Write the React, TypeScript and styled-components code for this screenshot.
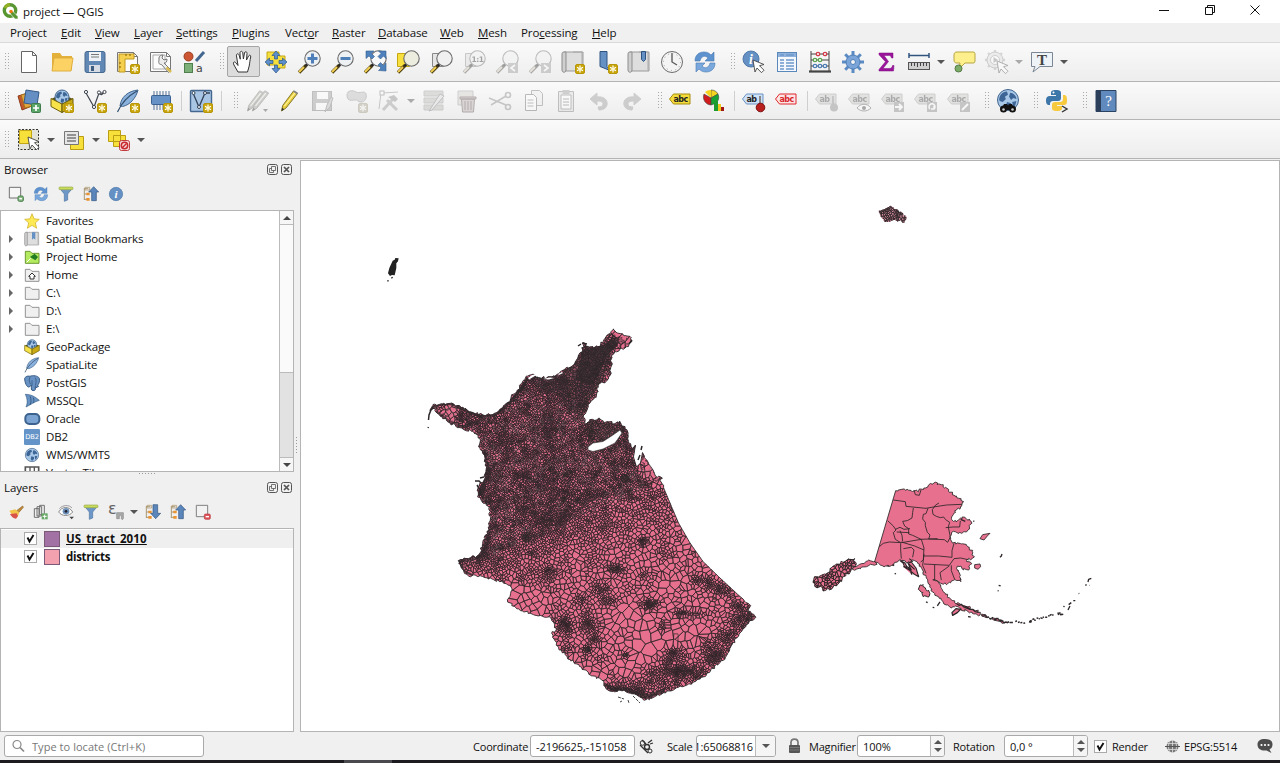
import React from "react";
import styled, { createGlobalStyle, css } from "styled-components";

const ui = `"Open Sans", "Noto Sans", sans-serif`;

const GlobalStyle = createGlobalStyle`
  * { box-sizing: border-box; }
  html, body { margin: 0; padding: 0; overflow: hidden; }
  body { font-family: ${ui}; font-size: 11.5px; letter-spacing: -0.1px; color: #111; background: #f0f0f0; cursor: default; }
  svg { display: block; flex: none; overflow: visible; }
`;

/* ---------- window frame ---------- */
const Window = styled.div`
  display: flex;
  flex-direction: column;
  width: 1280px;
  height: 763px;
  background: #f0f0f0;
`;
const TitleBar = styled.header`
  display: flex;
  align-items: center;
  height: 23px;
  padding: 0 2px;
  background: #fff;
`;
const Title = styled.span`
  flex: 1;
  margin-left: 5px;
  font-size: 11.5px;
`;
const WindowButton = styled.span`
  display: flex;
  justify-content: center;
  width: 45.5px;
  padding-bottom: 2px;
`;
const MenuBar = styled.nav`
  display: flex;
  align-items: center;
  height: 20px;
  padding-left: 10px;
  border-bottom: 1px solid #dadada;
`;
const MenuItem = styled.span<{ $w: number }>`
  width: ${(p) => p.$w + 14}px;
  white-space: nowrap;
  letter-spacing: -0.12px;
`;
const Toolbar = styled.div<{ $lower: boolean }>`
  display: flex;
  align-items: center;
  height: 39px;
  padding-top: ${(p) => (p.$lower ? 2 : 0)}px;
  border-bottom: 1px solid #b4b4b4;
  background: linear-gradient(#fafafa, #ededed);
`;
const Grip = styled.span<{ $first?: boolean }>`
  width: ${(p) => (p.$first ? 12.5 : 16)}px;
  height: 18px;
  padding-left: ${(p) => (p.$first ? 5 : 9)}px;
  &::before {
    content: "";
    display: block;
    width: 5px;
    height: 18px;
    background: radial-gradient(circle at 0.5px 0.5px, #aaa 0.6px, transparent 0.8px) 0 0 / 3px 3px;
  }
`;
const ToolButton = styled.button<{ $active?: boolean; $off?: boolean }>`
  display: flex;
  align-items: center;
  justify-content: center;
  width: 33px;
  height: 31px;
  padding: 0;
  border: 1px solid transparent;
  border-radius: 2px;
  background: none;
  ${(p) => p.$active && css`background: #dcdcdc; border-color: #a5a5a5;`}
  ${(p) => p.$off && css`filter: grayscale(0.85); opacity: 0.42;`}
`;
const Separator = styled.span`
  width: 7px;
  height: 20px;
  padding-left: 3px;
  &::before { content: ""; display: block; width: 1px; height: 20px; background: #cfcfcf; }
`;
const Caret = styled.span<{ $off?: boolean; $w?: number }>`
  display: flex;
  justify-content: center;
  width: ${(p) => p.$w ?? 12}px;
  &::before {
    content: "";
    margin-left: -1px;
    border: 4px solid transparent;
    border-bottom: 0;
    border-top-color: ${(p) => (p.$off ? "#aaa" : "#555")};
  }
`;

/* ---------- docks ---------- */
const Main = styled.main`
  display: flex;
  height: 573px;
`;
const Docks = styled.aside`
  display: flex;
  flex-direction: column;
  width: 294px;
`;
const DockHeader = styled.div`
  display: flex;
  align-items: center;
  gap: 3px;
  height: 22px;
  padding: 0 2px 2px 4px;
  & > span { flex: 1; }
`;
const DockTools = styled.div`
  display: flex;
  align-items: center;
  gap: 9px;
  height: 29px;
  padding: 0 0 3px 8px;
`;
const ListBox = styled.div<{ $h: number }>`
  display: flex;
  height: ${(p) => p.$h}px;
  border: 1px solid #b4b4b4;
  background: #fff;
  overflow: hidden;
`;
const Rows = styled.div`
  flex: 1;
  padding-top: 0.5px;
  overflow: hidden;
`;
const Row = styled.div<{ $selected?: boolean }>`
  display: flex;
  align-items: center;
  height: 18px;
  padding-left: 8px;
  background: ${(p) => (p.$selected ? "#efefef" : "transparent")};
`;
const Expander = styled.span<{ $on?: boolean }>`
  width: 15px;
  &::before {
    content: "";
    display: block;
    width: 0;
    border: 4px solid transparent;
    border-right: 0;
    border-left-color: ${(p) => (p.$on ? "#666" : "transparent")};
  }
`;
const RowLabel = styled.span<{ $strong?: boolean; $underline?: boolean }>`
  margin-left: 6px;
  line-height: 18px;
  white-space: pre;
  font-weight: ${(p) => (p.$strong ? 700 : 400)};
  text-decoration: ${(p) => (p.$underline ? "underline" : "none")};
  letter-spacing: ${(p) => (p.$underline ? "0.15px" : p.$strong ? "-0.3px" : "-0.13px")};
`;
const Swatch = styled.span<{ $c: string }>`
  width: 16px;
  height: 16px;
  margin-left: 7px;
  border: 1px solid #7a5a78;
  background: ${(p) => p.$c};
`;
const ScrollBar = styled.div`
  display: flex;
  flex-direction: column;
  width: 14px;
  border-left: 1px solid #bbb;
  background: #e2e2e2;
`;
const ScrollButton = styled.span<{ $down?: boolean }>`
  display: flex;
  align-items: center;
  justify-content: center;
  height: 14px;
  border: solid #bbb;
  border-width: ${(p) => (p.$down ? "1px 0 0" : "0 0 1px")};
  background: #f6f6f6;
  &::before {
    content: "";
    border: 4px solid transparent;
    ${(p) => (p.$down ? "border-bottom: 0; border-top-color: #444;" : "border-top: 0; border-bottom-color: #444;")}
  }
`;
const Thumb = styled.span`
  height: 148px;
  background: #fafafa;
  border-bottom: 1px solid #bbb;
`;
const ScrollTrack = styled.span`
  flex: 1;
`;
const Splitter = styled.div<{ $vertical?: boolean }>`
  display: flex;
  align-items: center;
  justify-content: center;
  ${(p) => (p.$vertical ? "width: 6px;" : "height: 5px;")}
  &::before {
    content: "";
    ${(p) => (p.$vertical ? "width: 3px; height: 17px;" : "width: 17px; height: 3px;")}
    background: radial-gradient(circle at 0.5px 0.5px, #999 0.5px, transparent 0.7px) 0 0 / 3px 3px;
  }
`;
const Canvas = styled.section`
  flex: 1;
  margin-top: 1px;
  border: 1px solid #b4b4b4;
  background: #fff;
  overflow: hidden;
`;

/* ---------- status bar ---------- */
const StatusBar = styled.footer`
  display: flex;
  align-items: center;
  height: 28px;
  padding: 0 0 0 4px;
  font-size: 11px;
  letter-spacing: -0.2px;
`;
const StatusText = styled.span<{ $w: number; $ml?: number }>`
  width: ${(p) => p.$w}px;
  margin-left: ${(p) => p.$ml ?? 0}px;
  white-space: nowrap;
`;
const StatusIcon = styled.span<{ $ml?: number }>`
  margin-left: ${(p) => p.$ml ?? 0}px;
`;
const Field = styled.span<{ $w: number; $ml?: number; $right?: boolean }>`
  display: flex;
  align-items: center;
  justify-content: ${(p) => (p.$right ? "flex-end" : "flex-start")};
  width: ${(p) => p.$w}px;
  height: 22px;
  margin-left: ${(p) => p.$ml ?? 0}px;
  padding-left: ${(p) => (p.$right ? 0 : 5)}px;
  border: 1px solid #a9a9a9;
  border-radius: 3px;
  background: #fff;
  white-space: nowrap;
  overflow: hidden;
`;
const FieldText = styled.span<{ $muted?: boolean; $end?: boolean }>`
  flex: 1;
  display: flex;
  min-width: 0;
  overflow: hidden;
  justify-content: ${(p) => (p.$end ? "flex-end" : "flex-start")};
  padding-right: ${(p) => (p.$end ? 2 : 0)}px;
  margin-left: ${(p) => (p.$muted ? 6 : 0)}px;
  color: ${(p) => (p.$muted ? "#777" : "#111")};
  letter-spacing: ${(p) => (p.$muted ? "0.05px" : "-0.08px")};
`;
const FieldButton = styled.span<{ $w: number }>`
  display: flex;
  flex-direction: column;
  align-items: center;
  justify-content: center;
  gap: 4px;
  width: ${(p) => p.$w}px;
  height: 20px;
  border-left: 1px solid #bbb;
  background: #f5f5f5;
`;
const Tip = styled.i<{ $up?: boolean }>`
  border: 4px solid transparent;
  ${(p) => (p.$up ? "border-top: 0; border-bottom-color: #555;" : "border-bottom: 0; border-top-color: #555;")}
`;
const Taskbar = styled.div`
  display: flex;
  height: 3px;
  padding-left: 344px;
  background: #1c1c20;
  &::before { content: ""; width: 48px; background: #4a4a4e; }
`;

/* ---------- icons ---------- */
const Ico = ({ s = 24, v = 24, children }: { s?: number; v?: number; children: React.ReactNode }) => (
  <svg width={s} height={s} viewBox={`0 0 ${v} ${v}`} fill="none">{children}</svg>
);
const Star = ({ x = 14, y = 14 }) => (
  <g transform={`translate(${x} ${y})`}>
    <rect x=".5" y=".5" width="9" height="9" rx="1.5" fill="#c9a60c" stroke="#b8960a" />
    <path d="M5 1.500v7M2 3.200l6 3.600M8 3.200L2 6.800" stroke="#fff" strokeWidth="1.200" />
    <circle cx="5" cy="5" r="1.200" fill="#fff6c8" />
  </g>
);
const Lens = ({ fill = "#eef1f4", children }: { fill?: string; children?: React.ReactNode }) => (
  <g>
    <path d="M2 22.500l7-7" stroke="#4a3c10" strokeWidth="3.400" />
    <path d="M2 22l5-5" stroke="#f2cf52" strokeWidth="2" />
    <circle cx="9.500" cy="15" r="1.500" fill="#222" />
    <circle cx="15.500" cy="8.500" r="7.700" fill={fill} stroke="#6a6a6a" strokeWidth="1.100" />
    {children}
  </g>
);
const Tag = ({ fill, stroke, color, text = "abc", y = 0 }: { fill: string; stroke: string; color: string; text?: string; y?: number }) => (
  <g transform={`translate(-.5 ${y})`}>
    <path d="M1 10l4-5h16.500v10H5z" fill={fill} stroke={stroke} strokeLinejoin="round" />
    <text x="5" y="13" fontFamily="DejaVu Sans" fontWeight="700" fontSize="8" letterSpacing="-.6" fill={color}>{text}</text>
  </g>
);
const Arrow4 = ({ fill = "#5d8fce" }) => (
  <path fill={fill} stroke="#2c5788" strokeWidth=".7" d="M12 1l4 4.500h-2.500V9h-3V5.500H8zM12 23l4-4.500h-2.500V15h-3v3.500H8zM1 12l4.500-4v2.500H9v3H5.500V16zM23 12l-4.500-4v2.500H15v3h3.500V16z" />
);
const Cursor = ({ x = 12, y = 10 }) => (
  <path transform={`translate(${x} ${y})`} d="M0 0l11 4.500-4.500 1.200 4.500 4.500-2.500 2.500-4.500-4.700L2 12z" fill="#fff" stroke="#444" strokeWidth=".9" strokeLinejoin="round" />
);
const Refresh = () => (
  <g>
    <path d="M2 11C2 5 6 2 11 2c3 0 5 1 7 3l3-3v9h-9l3-3c-3-3-7-2-8 3z" fill="#5f93cf" stroke="#4678b4" strokeWidth=".6" />
    <path d="M22 13c0 6-4 9-9 9-3 0-5-1-7-3l-3 3v-9h9l-3 3c3 3 7 2 8-3z" fill="#7aa8dc" stroke="#4678b4" strokeWidth=".6" />
  </g>
);
const Pencil = ({ c = "#e9cf3d" }) => (
  <g>
    <path d="M3.500 22l1.200-5.500L15.500 2l4 2.500L8 19z" fill={c} stroke="#85772b" strokeLinejoin="round" />
    <path d="M6.500 17L17.500 3.200" stroke="#fff3a0" strokeWidth="1.200" />
    <path d="M3.500 22l.7-3.200 2 1.400z" fill="#333" />
    <path d="M15.500 2l4 2.500" stroke="#888" strokeWidth="2" />
  </g>
);
const Paper = ({ children }: { children?: React.ReactNode }) => (
  <g>
    <path d="M1.500 2.500h16l4 4v15h-20z" fill="#fcfcfc" stroke="#777" />
    <path d="M17.500 2.500v4h4" stroke="#777" />
    {children}
  </g>
);
const Globe = ({ cx = 12, cy = 12, r = 10 }) => (
  <g>
    <circle cx={cx} cy={cy} r={r} fill="#a9c8e8" stroke="#3f648d" />
    <path transform={`translate(${cx - r} ${cy - r}) scale(${r / 10})`} d="M3 5c2-2 4-3 6-3l1 3-3 2 1 2-3 3-3-1c-1-2 0-4 1-6zM12 3c3 0 6 3 6 6l-3-1-2 2-2-3zM9 12l4 1v3l-3 3-2-3zM14 12l4-1-1 4-2 2z" fill="#3d6595" />
  </g>
);
const Box3d = () => (
  <g>
    <path d="M1 10l11-5 11 5-11 6z" fill="#5c5320" />
    <Globe cx={12} cy={8} r={7} />
    <path d="M1 9.500l11 5.500v8.500L1 17.500z" fill="#f8e24a" stroke="#6b5d0a" strokeLinejoin="round" />
    <path d="M23 9.500L12 15v8.500l11-6z" fill="#c9aa16" stroke="#6b5d0a" strokeLinejoin="round" />
  </g>
);
const Feather = () => (
  <g>
    <path d="M22 1C12 2 5 8 4 17l2.500.5C14 16 20 9 22 1z" fill="#8ab0dc" stroke="#41668f" />
    <path d="M1.500 23C5 15 12 7 21 2" stroke="#33506f" strokeWidth="1.200" />
  </g>
);
const Info = ({ cx = 12, cy = 12, r = 10 }) => (
  <g>
    <circle cx={cx} cy={cy} r={r} fill="#6490c4" stroke="#4f79ab" />
    <text x={cx} y={cy + r * 0.6} textAnchor="middle" fontFamily="Liberation Serif" fontStyle="italic" fontWeight="700" fontSize={r * 1.7} fill="#fff">i</text>
  </g>
);
const Book = () => (
  <g>
    <path d="M3 2h19v19H3z" fill="#dedede" stroke="#999" />
    <path d="M3 2c-2 0-2 1-2 3v15c0 3 4 3 4 0V2z" fill="#cfcfcf" stroke="#8d8d8d" />
    <path d="M12 2h9v18" stroke="#aaa" />
  </g>
);
const Funnel = () => (
  <g>
    <path d="M2 3h20l-7.500 9v9l-5 2V12z" fill="#6d97c8" stroke="#4b74a3" />
    <rect x="1.500" y="1.500" width="21" height="4" rx="1.500" fill="#c8dc5c" stroke="#98a94a" />
  </g>
);
const TreeArrow = ({ down }: { down?: boolean }) => (
  <g>
    <path d="M2 3v18M2 4h6M2 12h5M2 20h6" stroke="#a08a62" strokeWidth="1.300" />
    <path d="M3 2h7v4H3z" stroke="#b09c74" strokeWidth="1.200" />
    <path d="M5 10h5v4H5zM5 18h5v4H5z" fill="#e99330" />
    <path d="M16 1l7.500 8H20v13h-7V9H8.500z" transform={down ? "rotate(180 16 11.500)" : undefined} fill="#5b86bb" stroke="#32557f" />
  </g>
);
const Folder = ({ c = "#f0f0f0" }) => <path d="M2 3.500h7l3 3h10.500v15H2z" fill={c} stroke="#8c8c8c" strokeWidth="1.400" />;

const icons: Record<string, React.ReactNode> = {
  newDoc: <path d="M4.500 1.500h11l4 4v17h-15zM15.500 1.500v4h4" fill="#fff" stroke="#666" />,
  open: <g><path d="M2 3h8l2 3h10v14H2z" fill="#e3b03c" /><path d="M4 8h19l-2 13H2z" fill="#fcd265" stroke="#dfae40" /></g>,
  save: <g><rect x="2" y="1.500" width="20" height="21" rx="2" fill="#6187b5" stroke="#46698f" /><path d="M6 2h12v9H6z" fill="#eef1f6" /><path d="M8 4.500h8M8 7h8" stroke="#777" /><path d="M6 15h11v7H6z" fill="#d7dce4" /><path d="M8 16h3v5H8z" fill="#3e5c82" /></g>,
  layout: <g><Paper /><path d="M3 4h15v5H9v13H3z" fill="#f5cf4e" stroke="#c2981e" /><path d="M10 4v2M14 4v2M3 13h2M3 17h2" stroke="#806000" /><Star /></g>,
  manager: <g><Paper /><path d="M4 5h12v14H4z" stroke="#aaa" /><path d="M10 8c0-2 2-3 4-3l-1 3 2 2 3-1c0 3-1 4-3 4l7 7-2.500 2.500-7-8c-3 0-3-2-2.500-4.500z" fill="#ececec" stroke="#777" /><path d="M17.500 17.500l4.500 4.500" stroke="#d9bb50" strokeWidth="2.500" /></g>,
  style: <g><circle cx="6.500" cy="6.500" r="4.500" fill="#cc5633" stroke="#9b3c20" /><path d="M14 11l8-9" stroke="#42668f" strokeWidth="3" /><rect x="2.500" y="13.500" width="8" height="9" fill="#7caf78" stroke="#4f7f4d" /><text x="14" y="22" fontFamily="DejaVu Sans" fontSize="11" fill="#444">a</text></g>,
  hand: <path d="M7 22l-4-7c-1.500-3 .5-4 2-2l2 2.500L5.500 6c-.5-2.500 2-3 2.600-.8l1.200 4L9 3c0-2.200 2.600-2.200 2.800 0l.6 6L13.500 3c.4-2 2.600-1.600 2.500.5L15.500 10l2-4c1-1.500 2.600-.8 2.200 1-.8 3.500-1 6-1.500 9L16.500 22z" fill="#fff" stroke="#333" strokeLinejoin="round" />,
  panSel: <g><path d="M3 2h12v4h6v12H11v-3H3z" fill="#f7df3e" stroke="#c5a713" /><Arrow4 /></g>,
  zoomIn: <Lens><path d="M15.500 3.500v10M10.500 8.500h10" stroke="#4e7fb8" strokeWidth="3" /></Lens>,
  zoomOut: <Lens><path d="M10.500 8.500h10" stroke="#4e7fb8" strokeWidth="3" /></Lens>,
  zoomFull: <g><Lens fill="#f6f8fa" /><path d="M3 1h8l-2.500 2.500 3 3-2.500 2.500-3-3L3 8.500zM23 1v7.500L20.500 6l-3 3-2.500-2.500 3-3L15.500 1zM23 21v-8l-2.500 2.500-3-3-2.500 2.500 3 3-2.500 2.500z" fill="#4f81bd" stroke="#34608f" strokeWidth=".6" /></g>,
  zoomSel: <g><path d="M1.500 3.500h12v13h-12z" fill="#f7df3e" stroke="#c5a713" /><Lens fill="#ededdf" /></g>,
  zoomLayer: <g><path d="M3.500 3.500h11v13h-11z" fill="#e6e6e6" stroke="#888" /><Lens fill="#f0f0f0" /></g>,
  zoomNative: <g><path d="M3.500 3.500h11v13h-11z" fill="#ddd" stroke="#888" /><Lens><text x="9.500" y="11.500" fontFamily="DejaVu Sans" fontWeight="700" fontSize="7.500" letterSpacing="-.5" fill="#333">1:1</text></Lens></g>,
  zoomLast: <g><Lens /><rect x="13" y="13" width="10" height="10" fill="#999" /><path d="M20 15l-4 3 4 3" stroke="#fff" strokeWidth="1.600" /></g>,
  zoomNext: <g><Lens /><rect x="13" y="13" width="10" height="10" fill="#999" /><path d="M16 15l4 3-4 3" stroke="#fff" strokeWidth="1.600" /></g>,
  newBook: <g><Book /><Star /></g>,
  newMark: <g><path d="M6 1.500h7v15l3 4-10-4z" fill="#6590c4" stroke="#2f5380" /><Star /></g>,
  showBook: <g><Book /><path d="M14.500 1.500h4v8l-2 2-2-2z" fill="#6590c4" stroke="#2f5380" /></g>,
  clock: <g><circle cx="12" cy="12" r="10.500" fill="#f4f4f4" stroke="#6c6c6c" /><path d="M12 3v9l5 3" stroke="#555" strokeWidth="1.300" /><circle cx="12" cy="12" r="8.500" stroke="#999" strokeDasharray="1 3.450" /></g>,
  refresh: <Refresh />,
  identify: <g><Info cx={9} cy={9} r={8} /><Cursor x={11} y={10} /></g>,
  table: <g><rect x="2.500" y="2.500" width="19" height="19" fill="#f4f8fc" stroke="#5b88bb" /><path d="M3 3h18v4H3z" fill="#8fb2dc" /><path d="M5 10h4M11 10h8M5 13h4M11 13h8M5 16h4M11 16h8M5 19h4M11 19h8M5 5h4M11 5h8" stroke="#6c98cb" strokeWidth="1.300" /></g>,
  abacus: <g><path d="M3 1v20M21 1v20M3 4h18M3 10h18M3 16h18" stroke="#444" /><path d="M1 21.500h22" stroke="#444" strokeWidth="2.200" /><g fill="#fff" strokeWidth="1.300"><g stroke="#d03b47"><circle cx="10" cy="4" r="1.700" /><circle cx="17" cy="4" r="1.700" /></g><g stroke="#5ba34d"><circle cx="7" cy="10" r="1.700" /><circle cx="12" cy="10" r="1.700" /></g><g stroke="#4d7db5"><circle cx="7" cy="16" r="1.700" /><circle cx="12" cy="16" r="1.700" /><circle cx="17" cy="16" r="1.700" /></g></g></g>,
  gear: <g><path d="M12 1v22M1 12h22M4.200 4.200l15.600 15.600M19.800 4.200L4.200 19.800" stroke="#5c8bc3" strokeWidth="3" /><circle cx="12" cy="12" r="7" fill="#7ba5d8" stroke="#4e7fb9" /><circle cx="12" cy="12" r="2.500" fill="#f4f4f4" stroke="#4e7fb9" /></g>,
  sigma: <path d="M5 3h14v5h-1.500c-.5-2-1-2.500-3-2.500H10l4.500 6L9 18.500h6c2.500 0 3-1 3.500-3H20l-.5 5.500H5v-1.500l6.500-7.800L5 4.700z" fill="#9b159b" stroke="#7d0a80" strokeWidth=".5" />,
  ruler: <g><path d="M2 5.500h20M2 3v5M22 3v5" stroke="#31547f" strokeWidth="1.500" /><rect x="1.500" y="12.500" width="21" height="7" fill="#cfcfcf" stroke="#555" /><path d="M4.500 13v3M7.500 13v3M10.500 13v4M13.500 13v3M16.500 13v3M19.500 13v3" stroke="#444" /></g>,
  mapTip: <g><path d="M5 2h16c2 0 2 1 2 3v5c0 2 0 3-2 3h-8l-6 6 1-6H5c-2 0-3-1-3-3V5c0-2 1-3 3-3z" fill="#fdf08c" stroke="#b7a542" /><circle cx="6.500" cy="18.500" r="3.500" fill="#7dab68" stroke="#557b45" /></g>,
  action: <g><path d="M10 0v20M0 10h20M3 3l14 14M17 3L3 17" stroke="#aaa" strokeWidth="2.400" /><circle cx="10" cy="10" r="8" fill="#ddd" stroke="#999" /><circle cx="10" cy="10" r="4.500" fill="#fff" stroke="#999" /><path d="M8.500 7l4.500 3-4.500 3z" fill="#888" /><Cursor x={12} y={11} /></g>,
  annot: <g><path d="M1.500 2.500h21v14H10L3 22l2-5.500H1.500z" fill="#eef3f8" stroke="#7b8794" /><text x="12" y="14.500" textAnchor="middle" fontFamily="Liberation Serif" fontWeight="700" fontSize="15" fill="#444">T</text></g>,

  dataSource: <g><path d="M1 7l10-3 4 13-10 4z" fill="#c4572c" stroke="#8f3c1b" /><path d="M4 6l12-3 3 13-11 3z" fill="#e2a43c" stroke="#a6741b" /><path d="M9 1l13 2-2 13-13-2z" fill="#658fc3" stroke="#355a86" /><rect x="14.500" y="14.500" width="9" height="9" rx="1" fill="#5aa568" stroke="#3f7d4b" /><path d="M19 16v6M16 19h6" stroke="#fff" strokeWidth="1.700" /></g>,
  gpkgNew: <g><Box3d /><Star /></g>,
  shp: <g><path d="M3 4l8 14 5-14h5M16 4c2 3 4 1 5-1" stroke="#40464f" strokeWidth="1.200" /><g fill="#fff" stroke="#40464f"><circle cx="3" cy="3" r="1.600" /><circle cx="11" cy="18" r="1.600" /><circle cx="16" cy="3.500" r="1.600" /><circle cx="21.500" cy="3" r="1.600" /></g><Star /></g>,
  spatialiteNew: <g><Feather /><Star /></g>,
  memory: <g><path d="M5 2v19M8 2v19M11 2v19M14 2v19M17 2v19M20 2v19" stroke="#6f87a5" strokeWidth="1.200" /><rect x="2.500" y="6.500" width="19" height="9" rx="1" fill="#6691c6" stroke="#3a618f" /><Star /></g>,
  virtual: <g><rect x="1.500" y="1.500" width="21" height="21" rx="1" fill="#a9c5e4" stroke="#44678f" strokeWidth="1.400" /><path d="M4 4l6 14 6-14h5" stroke="#33445a" strokeWidth="1.300" /><g fill="#fff" stroke="#33445a"><circle cx="4.500" cy="4" r="1.500" /><circle cx="10" cy="18" r="1.500" /><circle cx="16" cy="4" r="1.500" /></g><Star /></g>,
  edits: <g transform="translate(-1 0)"><Pencil c="#999" /><g transform="translate(5 0)"><Pencil c="#999" /></g><path d="M19 20l5 0-2.500 3z" fill="#444" /></g>,
  pencil: <Pencil />,
  saveEdits: <g><rect x="1.500" y="2.500" width="19" height="19" fill="#999" stroke="#777" /><path d="M6 3h11v7H6zM5 14h11v7H5z" fill="#fff" /><path d="M22 9l-3 9-5 5 2-7 4-8z" fill="#bbb" stroke="#777" /></g>,
  addPoly: <g><path d="M3 6c0-5 6-5 9-3s9-2 10 2-1 8-5 8-3-3-7-2-7 0-7-5z" fill="#bbb" stroke="#888" /><Star /></g>,
  vertex: <g><path d="M4 4L2 20M6 4l15-1" stroke="#888" /><rect x="3" y="2" width="4" height="4" fill="#fff" stroke="#777" /><path d="M6 21L17 9M10 11l10 10" stroke="#999" strokeWidth="3" /><path d="M11 8l6-2 4 4-3 3z" fill="#888" /></g>,
  modify: <g><path d="M2 2h19v5H2zM2 9h19v5H2zM2 16h19v5H2z" fill="#bcbca0" stroke="#999" /><path d="M7 22L18 5l4 2-12 14z" fill="#ddd" stroke="#777" /></g>,
  trash: <g><path d="M3 2h15v14H3z" fill="#d6d2a8" stroke="#999" /><path d="M5 8h16v2H5zM6.500 10h13l-1 13h-11z" fill="#e3a3a3" stroke="#b33" /><path d="M10 12v9M13 12v9M16 12v9" stroke="#b33" /></g>,
  cut: <g stroke="#888" strokeWidth="1.600"><path d="M1 9l17 7M3 16l15-9" /><circle cx="20" cy="6" r="2.500" /><circle cx="20" cy="18" r="2.500" /></g>,
  copy: <g><path d="M10.500 1.500h8l3 3v12h-11z" fill="#eee" stroke="#777" /><path d="M4.500 5.500h8l3 3v13h-11z" fill="#fff" stroke="#666" /><path d="M6.500 11h6M6.500 14h6M6.500 17h6" stroke="#777" /></g>,
  paste: <g><path d="M4.500 2.500h15v20h-15z" fill="#ddd" stroke="#777" /><path d="M7 6h10v14H7z" fill="#fff" stroke="#777" /><path d="M8.500 1h7v4h-7z" fill="#999" /><path d="M9 10h6M9 13h6M9 16h6" stroke="#666" /></g>,
  undo: <path d="M3 10l7-6v4c7-1 11 3 10 8-1 4-5 5-8 5l-1-3c3 0 5-1 5-3s-2-3-6-3v4z" fill="#999" stroke="#999" />,
  redo: <path d="M21 10l-7-6v4c-7-1-11 3-10 8 1 4 5 5 8 5l1-3c-3 0-5-1-5-3s2-3 6-3v4z" fill="#999" stroke="#999" />,
  label: <Tag fill="#f4dc3c" stroke="#a48c12" color="#222" />,
  diagram: <g><path d="M9 9V1a8 8 0 0 1 7 4z" fill="#f6d51e" stroke="#444" strokeWidth=".6" /><path d="M9 9L3 3a8 8 0 0 1 6-2z" fill="#f6d51e" /><path d="M9 9L2 5a8 8 0 0 0 7 11z" fill="#d01c1c" stroke="#444" strokeWidth=".6" /><path d="M9 9l7-4c2 5 0 9-7 11z" fill="#18a431" stroke="#444" strokeWidth=".6" /><path d="M12 12h4v10h-4z" fill="#1c9c30" /><path d="M16 15h3v7h-3z" fill="#eec91c" /><path d="M19 18h3v4h-3z" fill="#a31616" /></g>,
  labelPin: <g><Tag fill="#cfe1f6" stroke="#6b93c4" color="#222" text="ab" /><path d="M18 7v9" stroke="#888" strokeWidth="2" /><circle cx="18.500" cy="18.500" r="4.300" fill="#b7201f" stroke="#7c1111" /></g>,
  labelRed: <Tag fill="#fbe4e4" stroke="#e0262c" color="#d8262c" />,
  lPin: <g><Tag fill="#c9c9b8" stroke="#999" color="#444" text="ab" /><path d="M18 7v9" stroke="#888" strokeWidth="2" /><circle cx="19" cy="18.500" r="4" fill="#888" /></g>,
  lShow: <g><Tag fill="#c9c9b8" stroke="#999" color="#444" /><path d="M9 19c4-5 10-5 14 0-4 4-10 4-14 0z" fill="#fff" stroke="#555" /><circle cx="16" cy="19" r="2" fill="#444" /></g>,
  lMove: <g><Tag fill="#c9c9b8" stroke="#999" color="#444" /><rect x="13" y="13" width="10" height="10" fill="#888" /><path d="M14 18h7M18 15l3 3-3 3" stroke="#fff" strokeWidth="1.800" /></g>,
  lRot: <g><Tag fill="#c9c9b8" stroke="#999" color="#444" /><rect x="13" y="13" width="10" height="10" fill="#888" /><path d="M16 20a3 3 0 1 1 4 0M20 17v3h-3" stroke="#fff" strokeWidth="1.500" /></g>,
  lEdit: <g><Tag fill="#c9c9b8" stroke="#999" color="#444" /><rect x="13" y="13" width="10" height="10" fill="#888" /><path d="M15 21l6-6" stroke="#fff" strokeWidth="2" /></g>,
  search: <g><Globe cx={12} cy={11} r={10.500} /><path d="M5 21l3-6h3l1 1.500 1-1.500h3l3 6z" fill="#111" /><circle cx="7.500" cy="20" r="3.500" fill="#111" /><circle cx="16.500" cy="20" r="3.500" fill="#111" /><circle cx="7.500" cy="20.500" r="1.300" fill="#ccc" /><circle cx="16.500" cy="20.500" r="1.300" fill="#ccc" /></g>,
  python: <g><path d="M11 1c4 0 5 1 5 3v5c0 2-1 3-3 3H8c-2 0-3 1-3 3v1H3c-2-1-2-3-2-5s1-4 4-4h6V6H6V4c0-2 1-3 5-3z" fill="#3d76a9" /><path d="M12 22c-4 0-5-1-5-3v-3c0-2 1-3 3-3h5c2 0 3-1 3-3V6h2c2 1 2 3 2 6s-1 4-3 4h-7v1h5v2c0 2-1 3-5 3z" fill="#f7ca3d" /><circle cx="8.500" cy="3.500" r="1" fill="#fff" /><path d="M17 17l5 3-5 3" stroke="#333" strokeWidth="1.400" /></g>,
  help: <g><path d="M2 1.500h20v21H2z" fill="#6089bd" stroke="#2b4360" /><path d="M2 1.500h5v21H2z" fill="#2c3f5a" /><text x="14.500" y="17" textAnchor="middle" fontFamily="Liberation Serif" fontSize="15" fill="#fff">?</text></g>,

  select: <g><path d="M1.500 1.500h20v20h-20z" fill="#e3e3d9" stroke="#333" strokeDasharray="2 1.500" /><path d="M2.500 2.500h12v13h-12z" fill="#f8e03a" stroke="#c5a713" /><Cursor x={11} y={9} /></g>,
  selForm: <g><path d="M8.500 8.500h13v13h-13z" fill="#f8e03a" stroke="#b99d12" /><path d="M2.500 3.500h14v13h-14z" fill="#e6e6e6" stroke="#777" /><path d="M5 7h9M5 10h9M5 13h9" stroke="#777" strokeWidth="1.400" /></g>,
  deselect: <g><path d="M1.500 2.500h12v11h-12zM6.500 7.500h12v11h-12z" fill="#f8e03a" stroke="#b99d12" /><rect x="12.500" y="12.500" width="10" height="10" rx="2" fill="#f6d9d9" stroke="#c43b3e" /><circle cx="17.500" cy="17.500" r="3.200" stroke="#c82b30" strokeWidth="1.500" /><path d="M15.500 19.500l4-4" stroke="#c82b30" strokeWidth="1.500" /></g>,

  addLayer: <g><path d="M2 2h17v16H2z" fill="#f6f6f6" stroke="#666" strokeWidth="1.400" /><rect x="15" y="15" width="8" height="8" rx="2" fill="#8ab885" stroke="#49804a" strokeWidth="1.500" /><path d="M17 19h4" stroke="#fff" strokeWidth="2" /></g>,
  removeLayer: <g><path d="M2 2h17v17H2z" fill="#f2f2f2" stroke="#777" strokeWidth="1.400" /><rect x="14" y="15" width="9" height="8" rx="2" fill="#e0565c" stroke="#b8383f" /><path d="M16 19h5" stroke="#fff" strokeWidth="2" /></g>,
  filter: <Funnel />,
  collapse: <TreeArrow />,
  expand: <TreeArrow down />,
  info: <Info />,
  styling: <g><path d="M13 10l9-7 1 2-7 8z" fill="#c08a3a" stroke="#916322" /><path d="M2 10l9-2 6 5-3 7c-5 0-9-5-12-10z" fill="#f1c54a" /><path d="M3 15l10-1 2 4-3 4c-4 0-7-3-9-7z" fill="#d9534a" /></g>,
  addGroup: <g><path d="M2 7h7v13H2zM6 4h7v14H6zM10 2h7v14h-7z" stroke="#666" strokeWidth="1.400" /><rect x="13" y="14" width="9" height="9" fill="#67a867" /><path d="M17.500 16v6M14.500 18.500h6" stroke="#fff" strokeWidth="1.500" /></g>,
  eye: <g><path d="M1 12C6 3 17 3 22 12 17 19 6 19 1 12z" fill="#fff" stroke="#777" strokeWidth="1.300" /><circle cx="12" cy="11" r="5" fill="#6c8fb8" /><circle cx="12" cy="11" r="2" fill="#223" /><path d="M2 7C7 1 17 1 21 6" stroke="#888" strokeWidth="1.200" /><path d="M17 19h7l-3.500 4z" fill="#444" /></g>,
  epsilon: <g><text x="0" y="15" fontFamily="DejaVu Sans" fontSize="24" fill="#666">ε</text><path d="M13 13h10v8c0 3-3 3-3 0v-4h-3v5h-4z" fill="#aaa" stroke="#888" /></g>,

  star: <path d="M12 1l3.200 7.800L23 9.500l-6 5.300 2 8.200-7-4.500L5 23l2-8.200-6-5.300 7.800-.7z" fill="#fdea54" stroke="#cba81c" />,
  bookmark: <g><Book /><path d="M12 2h5v11l-2.500-2L12 13z" fill="#6590c4" /></g>,
  projHome: <g><path d="M2 3.500h7l3 3h10.500v15H2z" fill="#b4ea5f" stroke="#65912c" strokeWidth="1.400" /><path d="M9 12l7-5 5 5-4 5z" fill="#217c22" /><path d="M4 20l6-6" stroke="#fff" strokeWidth="1.500" /></g>,
  home: <g><Folder /><path d="M7 14l5-5 5 5h-2v4H9v-4z" fill="#fff" stroke="#333" strokeWidth="1.500" /></g>,
  folder: <Folder />,
  gpkg: <Box3d />,
  feather: <Feather />,
  elephant: <g><path d="M1 5c2-4 6-3.500 8-3 4-2 12-1 14 3 1 5-1 9-3 11l2 1-4 2-1-2v5c-1 2-6 2-6-1v-6l-3 3c-4 1-7-7-7-13z" fill="#6892c3" stroke="#345a84" strokeWidth="1.500" /><path d="M9 3c-2 4-1 8 1 11M17 4c2 4 1 8 0 12M12 8v8" stroke="#345a84" strokeWidth="1.200" /></g>,
  mssql: <g><path d="M2 2c8 0 14 3 21 9-7 2-12 6-20 10 3-6 2-13-1-19z" fill="#6892c3" stroke="#345a84" /><path d="M9 5c2 4 2 9 0 13M14 7c1 3 1 5 0 8" stroke="#345a84" strokeWidth="1.400" /></g>,
  oracle: <rect x="2" y="4.500" width="21" height="15" rx="6" fill="#7ba4d3" stroke="#3c628d" strokeWidth="3" />,
  db2: <g><rect width="24" height="24" rx="2" fill="#6595c8" /><text x="12" y="15.500" textAnchor="middle" fontFamily="DejaVu Sans" fontSize="10" fill="#fff">DB2</text></g>,
  globe: <Globe />,
  tiles: <g><path d="M2 3h20v20H2z" fill="#fff" stroke="#555" strokeWidth="2.500" /><path d="M9 3v20M15.500 3v20M2 10h20M2 16h20" stroke="#555" strokeWidth="2" /></g>,
};

const DockButtons = () => (
  <>
    <svg width="11" height="11" viewBox="0 0 11 11" fill="none" stroke="#555"><rect x=".5" y=".5" width="10" height="10" rx="2" /><path d="M4.500 2.500h4v4h-4zM6.500 6.500v2h-4v-4h2" strokeWidth=".8" /></svg>
    <svg width="11" height="11" viewBox="0 0 11 11" fill="none" stroke="#555"><rect x=".5" y=".5" width="10" height="10" rx="2" /><path d="M3 3l5 5M8 3L3 8" strokeWidth="1.700" /></svg>
  </>
);
const CheckBox = () => (
  <svg width="13" height="13" viewBox="0 0 13 13" fill="none"><rect x=".5" y=".5" width="12" height="12" fill="#fff" stroke="#aaa" /><path d="M3.500 5.500l2 4L9.500 3" stroke="#111" strokeWidth="1.900" /></svg>
);

/* ---------- map geometry ---------- */
type Pt = [number, number];
const random = (seed: number) => () => {
  seed = (seed + 0x6d2b79f5) | 0;
  let t = Math.imul(seed ^ (seed >>> 15), 1 | seed);
  t = (t + Math.imul(t ^ (t >>> 7), 61 | t)) ^ t;
  return ((t ^ (t >>> 14)) >>> 0) / 4294967296;
};
const parse = (s: string): Pt[] => s.trim().split(/\s+/).map((p) => p.split(",").map(Number) as Pt);

/* turns a coarse coastline into a ragged one; the closing segment stays straight */
const coast = (src: string, amp: number, step: number, seed = 5, calm: (x: number, y: number) => boolean = () => false) => {
  const r = random(seed);
  const pts = parse(src);
  let d = `M${pts[0]}`;
  for (let i = 1; i < pts.length; i++) {
    const [ax, ay] = pts[i - 1];
    const [bx, by] = pts[i];
    const n = Math.max(1, Math.round(Math.hypot(bx - ax, by - ay) / step));
    for (let k = 1; k <= n; k++) {
      const x = ax + ((bx - ax) * k) / n;
      const y = ay + ((by - ay) * k) / n;
      const j = calm(x, y) ? 0 : k === n ? amp * 0.4 : amp;
      d += `L${(x + (r() - 0.5) * 2 * j).toFixed(1)},${(y + (r() - 0.5) * 2 * j).toFixed(1)}`;
    }
  }
  return d + "Z";
};

const inside = (poly: Pt[], x: number, y: number) => {
  let hit = false;
  for (let i = 0, j = poly.length - 1; i < poly.length; j = i++) {
    const [xi, yi] = poly[i];
    const [xj, yj] = poly[j];
    if (yi > y !== yj > y && x < ((xj - xi) * (y - yi)) / (yj - yi) + xi) hit = !hit;
  }
  return hit;
};

/* smooth value noise in 0..1 */
const lattice = (i: number, j: number) => {
  const n = Math.sin(i * 127.1 + j * 311.7) * 43758.5453;
  return n - Math.floor(n);
};
const noise = (x: number, y: number) => {
  const i = Math.floor(x);
  const j = Math.floor(y);
  const u = x - i;
  const v = y - j;
  const su = u * u * (3 - 2 * u);
  const sv = v * v * (3 - 2 * v);
  const a = lattice(i, j) + (lattice(i + 1, j) - lattice(i, j)) * su;
  const b = lattice(i, j + 1) + (lattice(i + 1, j + 1) - lattice(i, j + 1)) * su;
  return a + (b - a) * sv;
};

/* Voronoi cell outlines for scattered sites */
const cellPath = (sites: Pt[], reach: number) => {
  const size = reach / 2;
  const grid = new Map<number, Pt[]>();
  const key = (i: number, j: number) => i * 5000 + j;
  sites.forEach((p) => {
    const k = key(Math.floor(p[0] / size), Math.floor(p[1] / size));
    if (!grid.has(k)) grid.set(k, []);
    grid.get(k)!.push(p);
  });
  const out: string[] = [];
  for (const [x, y] of sites) {
    const gx = Math.floor(x / size);
    const gy = Math.floor(y / size);
    const gather = (n: number) => {
      const near: [number, Pt][] = [];
      for (let i = -n; i <= n; i++)
        for (let j = -n; j <= n; j++)
          for (const q of grid.get(key(gx + i, gy + j)) ?? []) {
            const d = (q[0] - x) ** 2 + (q[1] - y) ** 2;
            if (d > 0) near.push([d, q]);
          }
      return near;
    };
    let near = gather(1);
    if (near.length < 60) near = gather(3);
    near.sort((a, b) => a[0] - b[0]);
    let cell: Pt[] = [[x - reach, y - reach], [x + reach, y - reach], [x + reach, y + reach], [x - reach, y + reach]];
    for (const [d, q] of near) {
      let far = 0;
      for (const c of cell) far = Math.max(far, (c[0] - x) ** 2 + (c[1] - y) ** 2);
      if (d > far * 4) break;
      const nx = q[0] - x;
      const ny = q[1] - y;
      const side = (c: Pt) => (c[0] - x) * nx + (c[1] - y) * ny - d / 2;
      const next: Pt[] = [];
      for (let i = 0; i < cell.length; i++) {
        const a = cell[i];
        const b = cell[(i + 1) % cell.length];
        const sa = side(a);
        const sb = side(b);
        if (sa <= 0) next.push(a);
        if (sa < 0 !== sb < 0) {
          const t = sa / (sa - sb);
          next.push([a[0] + (b[0] - a[0]) * t, a[1] + (b[1] - a[1]) * t]);
        }
      }
      cell = next;
    }
    if (cell.length) out.push("M" + cell.map((c) => `${c[0].toFixed(1)},${c[1].toFixed(1)}`).join("L") + "Z");
  }
  return out.join("");
};

/* random sites whose local density follows the wanted cell size */
const scatter = (box: [number, number, number, number], perUnit: number, gap: (x: number, y: number) => number, seed: number, start: Pt[] = []) => {
  const r = random(seed);
  const size = 6;
  const grid = new Map<number, Pt[]>();
  const key = (x: number, y: number) => Math.floor(x / size) * 5000 + Math.floor(y / size);
  const pts: Pt[] = [];
  const add = (p: Pt) => {
    pts.push(p);
    const k = key(p[0], p[1]);
    if (!grid.has(k)) grid.set(k, []);
    grid.get(k)!.push(p);
  };
  start.forEach(add);
  const tries = Math.round(box[2] * box[3] * perUnit);
  for (let n = 0; n < tries; n++) {
    const x = box[0] + r() * box[2];
    const y = box[1] + r() * box[3];
    const keep = r();
    const g = gap(x, y);
    if (g <= 0 || keep > 1.3 / (perUnit * g * g)) continue;
    const min = (g * 0.42) ** 2;
    let ok = true;
    for (let i = -1; i <= 1 && ok; i++)
      for (let j = -1; j <= 1 && ok; j++)
        for (const q of grid.get(key(x + i * size, y + j * size)) ?? [])
          if ((q[0] - x) ** 2 + (q[1] - y) ** 2 < min) { ok = false; break; }
    if (ok) add([x, y]);
  }
  return pts;
};

const MAINLAND = `613,329 618,333 625,336 631,337.500 631.500,342 627,347 620,349 615,352 611,356 611,367 610.500,375 605,382 600,383.500 598,387.500 596.500,397 592.500,399.500 588,407 583.500,417 586,424 592.500,419.500 600,418.500 604,423 608.500,421.500 615,424 620,421.500 622,426 625,427 628,433 628.500,443 632.500,448.500 635.500,445 633.500,457 636.500,467 640.500,463 642.500,452.500 646.500,460 653,470 657,477 662,478 660,481 662,484 670,503 678.500,523 690,543 703,561.500 720,578 740,596.500 750.500,605 748.500,611.500 756,617 748,623 740,633 733,643 725,657 715,666.500 706.500,675 693,683 676.500,688 660,695 645,700 636.500,695 623,690 610,691.500 601.500,680 593,676 580,666.500 566.500,656.500 558,646.500 551.500,633 556.500,630 550,618 536.500,615 523,611.500 508,602.500 511.500,591.500 510,585 500,581.500 483,576 468,576 461.500,568 458,560.500 470,558 480,555 483,543 489,526.500 490,512 488,506.500 478,497 478,488 485,478 486.500,466.500 483,453 478.500,447 480,438.500 473,431.500 460,428 450,423 441.500,416.500 433,408 430,410 433,404.500 450,403 463,407.500 473,412.500 485,415.500 495,413.500 506.500,403.500 516.500,391.500 525,378 531.500,374.500 541.500,378 553,376 561.500,371 573,365 578,356.500 583,350 583,343 590,347 600,346.500 605,338.500 613,329`;
const mainlandPts = parse(MAINLAND);

/* towns and metro areas: x, y, radius x, radius y */
const TOWNS = [
  [613, 568, 7, 4], [578, 600, 5, 5], [650, 604, 8, 4], [687, 613, 12, 2], [587, 650, 5, 4], [572, 648, 5, 3], [625, 655, 4, 3],
  [673, 657, 8, 6], [723, 587, 10, 7], [704, 581, 8, 4], [617, 688, 14, 5], [550, 573, 7, 5], [663, 625, 3, 4], [600, 590, 6, 7],
  [590, 625, 7, 9], [645, 575, 4, 3], [565, 625, 6, 8], [745, 610, 9, 8], [682, 672, 20, 6], [660, 684, 22, 5], [632, 692, 15, 5],
  [714, 655, 8, 11], [730, 640, 8, 10], [740, 622, 9, 8], [700, 674, 9, 6], [643, 541, 4, 3], [606, 600, 5, 4], [596, 640, 5, 4],
];
const depth = (x: number, y: number) => (x - 490) * 0.414 + (y - 560) * 0.911;
const mainlandGap = (x: number, y: number) => {
  const wild = 0.6 + noise(x / 6, y / 6) * 0.85;
  if (x > 616 && y < 351) return 5.5;
  if (x > 609 && y < 340) return 3;
  if (x < 470 && y > 400 && y < 430) return (x < 458 ? 3.1 : 2.3) * wild;
  if (x > 637 && y < 490 && x - y > 165) return 5;
  const d = depth(x, y) + (noise(x / 22 + 9, y / 22) - 0.5) * 22;
  if (d < -8) return 1.85 * (0.72 + noise(x / 5, y / 5) * 0.62);
  let s = d < 45 ? 2.1 + (d + 8) * 0.047 : 4.6;
  if (d > 45) s = 3.5 + noise(x / 15, y / 15 + 4) * 2.8;
  if (x > 622 && x < 712 && y > 602 && y < 655) s = 7.4;
  if (x > 612 && x < 650 && y > 640 && y < 675) s = 7;
  if (x < 545 && y > 585) s = 8.5;
  if (x < 510 && y > 560 && d > 0) s = Math.min(s, 5);
  if (x > 690 && y < 600 && d > 45) s = Math.min(s, 3.9);
  for (const [tx, ty, rx, ry] of TOWNS) {
    const q = ((x - tx) / rx) ** 2 + ((y - ty) / ry) ** 2;
    if (q < 1) s = Math.min(s, 1.7);
    else if (q < 3) s = Math.min(s, 2.7);
  }
  return s * wild;
};

/* sectional grid of the plains: rows run parallel, spacing grows away from the dense side */
const plains: Pt[] = [];
{
  const r = random(21);
  let d = -8;
  while (d < 62) {
    const gap = 2.9 + (d + 8) * 0.05;
    for (let u = 0; u < 260; u += gap) {
      const x = 490 + u * 0.911 + d * 0.414 + (r() - 0.5) * gap * 0.35;
      const y = 560 - u * 0.414 + d * 0.911 + (r() - 0.5) * gap * 0.25;
      if (inside(mainlandPts, x, y) && noise(x / 16 + 3, y / 16) > 0.3 && r() > 0.14) plains.push([x, y]);
    }
    d += gap;
  }
}
const mainlandSites = scatter([425, 325, 335, 380], 1.4, (x, y) => (inside(mainlandPts, x, y) ? mainlandGap(x, y) : 0), 9, plains);
const mainlandCells = cellPath(mainlandSites, 14);
const calmEdge = (x: number, y: number) => (x > 663 && y > 484 && y < 600) || (x > 631 && x < 645 && y > 444 && y < 468);
const mainlandShape = coast(MAINLAND, 1.3, 2, 5, calmEdge);

/* uneven tone of the crowded eastern half */
const toneRandom = random(77);
const tone = { dark: "", pale: "" };
for (let i = 0; i < 12000; i++) {
  const x = 430 + toneRandom() * 250;
  const y = 335 + toneRandom() * 235;
  if (depth(x, y) > -2 || !inside(mainlandPts, x, y)) continue;
  const n = noise(x / 11 + 40, y / 11);
  if (n > 0.62 - toneRandom() * 0.25) tone.dark += `M${x.toFixed(1)},${y.toFixed(1)}h${(1 + toneRandom() * 1.2).toFixed(1)}`;
  else if (toneRandom() < 0.85) tone.pale += `M${x.toFixed(1)},${y.toFixed(1)}h.9`;
}

const PANHANDLE = "150,268 165,265 165,290 150,305 120,335 95,355 70,362 60,350 45,350 38,340 45,322 75,312 100,290 130,275 150,268";
const panhandleCells = cellPath(scatter([30, 260, 145, 110], 0.3, (x, y) => 6 + noise(x / 14, y / 14) * 6, 4), 40);
const ALASKA = "287,62 305,58 340,65 370,58 385,45 405,38 430,50 445,58 460,75 490,95 485,108 470,120 455,140 460,155 475,150 495,142 515,155 508,170 500,185 485,190 460,185 450,200 458,220 480,222 500,225 518,245 520,265 500,270 515,280 508,295 490,300 480,288 470,295 480,320 482,335 465,330 440,343 415,335 400,330 422,345 430,365 450,385 465,398 500,410 540,428 538,436 510,428 475,412 450,410 430,395 405,375 390,350 378,320 362,290 350,275 335,268 320,278 300,270 270,290 250,288 225,275";
const HAWAII = "57,62 72,58 90,48 105,58 115,62 128,70 140,80 132,98 118,92 95,92 85,97 72,92 60,78 57,62";
const hawaiiCells = cellPath(scatter([50, 40, 100, 65], 0.4, (x, y) => 4 + noise(x / 12, y / 12) * 2.5, 8), 30);
const chain = (() => {
  const r = random(31);
  const track = parse("545,435 570,445 595,450 615,458 645,457 685,457 700,448 735,440 770,432 785,434");
  let d = "";
  for (let i = 1; i < track.length; i++) {
    const [ax, ay] = track[i - 1];
    const [bx, by] = track[i];
    for (let k = 0; k < 5; k++) {
      const x = ax + ((bx - ax) * k) / 5 + r() * 3;
      const y = ay + ((by - ay) * k) / 5 + (r() - 0.5) * 6;
      if (r() > 0.15) d += `M${x.toFixed(1)},${y.toFixed(1)}l${(3 + r() * 5).toFixed(1)},${((r() - 0.5) * 6).toFixed(1)}`;
    }
  }
  return d;
})();

const INK = "#2d2729";
const PINK = "#e8708f";

const MapView = () => (
  <svg width="978" height="570" viewBox="301 161 978 570" fill="none">
    <defs>
      <clipPath id="mainland"><path d={mainlandShape} /></clipPath>
      <clipPath id="panhandle"><path d={coast(PANHANDLE, 5, 7)} /></clipPath>
      <clipPath id="islands"><path d={coast(HAWAII, 3, 5)} /></clipPath>
    </defs>

    <path d={mainlandShape} fill={PINK} />
    <g clipPath="url(#mainland)">
      <path d={mainlandCells} stroke={INK} strokeWidth=".68" />
      <path d={tone.dark} stroke={INK} strokeWidth="1.200" opacity=".7" />
      <path d={tone.pale} stroke="#85757a" strokeWidth=".9" opacity=".65" />
      <path d="M530 376L560 376 583 350 606 342 612 350 605 375 590 400 583 417 570 412 560 395 540 388z" fill={INK} opacity=".5" />
      <path d="M583 350L606 345 615 334 618 345 606 356 600 372 592 385 575 380z" fill={INK} opacity=".65" />
      <path d="M585 420L625 424 622 436 590 444z" fill={INK} opacity=".4" />
      <path d="M430 408L440 404 452 404 466 410 480 416 495 415 508 404 520 390 528 378" stroke={INK} strokeWidth="2.500" opacity=".8" />
      <path d="M436 412L448 421 462 427 470 425 466 418" stroke={INK} strokeWidth="3.500" opacity=".65" />
      <path d="M458 561L482 556 486 540 491 525" stroke={INK} strokeWidth="4" opacity=".6" />
      <path d="M459 562L464 571 472 575" stroke={INK} strokeWidth="2" opacity=".8" />
      <path d="M483 450L488 470 484 484 481 496" stroke={INK} strokeWidth="5" opacity=".65" />
      <path d="M603 684L615 689 628 690 645 697 664 691" stroke={INK} strokeWidth="4" opacity=".75" />
      <path d="M748 608L752 617 742 628" stroke={INK} strokeWidth="5" opacity=".5" />
      <g fill={INK} opacity=".7">
        <path d="M606 571l4-4 5 0 4-3 2 2-4 4-6 3z" />
        <path d="M643 609l6-3 7-7 1 3-6 6-5 3z" />
        <path d="M584 648l5-2 2 5-5 2z" />
        <path d="M623 653l4 0 0 4-4 0z" />
        <path d="M621 474l6 0 3 5-4 4-5-2z" />
        <path d="M521 535l6-3 5 4-3 6-6 0z" />
        <path d="M560 498l4-3 3 4-4 4z" />
        <path d="M574 500l5-2 2 4-5 3z" />
        <path d="M496 559l5-3 3 3-5 3z" />
        <path d="M562 473l5-1 2 5-5 1z" />
      </g>
    </g>
    <path d={mainlandShape} stroke={INK} strokeWidth=".9" />
    <path d="M588 447L593 443 603 441.500 613 435 620 430 622 433 615 443 603 449 593 451.500 588 450z" fill="#fff" stroke={INK} strokeWidth=".6" />
    <path d="M428.500 420l.5-5 2-5 2-2M428 428l.5-1M475 481l4 0 2 2M480 478l4-1M477 485l3 5 0 6M641 450l1-4M578 346l3-2M581 352l2 4M638 460l2-5M582 343l5 1M632 340l-3 4" stroke={INK} strokeWidth="1.500" />
    <path d="M528 378l4-3 5-.5-3 2-5 3zM543 379l7-1.500 4 .5-5 1.500zM558 374l4-2 1 1-4 2z" fill="#fff" />
    <path d="M618 697l6 2M620 702l2-1M628 700l1 3M633 696l7 7" stroke="#444" strokeWidth="1" strokeDasharray="3 1" />

    <g transform="translate(370 250) scale(.3333)">
      <path d="M68 32l6-3 2-5 10 1-2 9-5 6 0 14-5 22-8-1-6 3-6-8 4-16z" fill="#222" />
      <path d="M64 85l4-3M52 93l4-1" stroke="#222" strokeWidth="4" />
    </g>

    <g transform="translate(860 190) scale(.3333)">
      <path d={coast(HAWAII, 3, 5)} fill="#d58a9c" />
      <path d={hawaiiCells} clipPath="url(#islands)" stroke={INK} strokeWidth="2" />
    </g>

    <g transform="translate(800 470) scale(.3333)" stroke={INK} strokeWidth="2.600" strokeLinejoin="round">
      <path d={coast(ALASKA, 4, 5)} fill={PINK} />
      <path d={coast("225,275 207,270 185,282 163,290 157,298 171,298 191,290 211,284 231,284", 3, 6)} fill={PINK} />
      <path d={coast(PANHANDLE, 5, 7)} fill={PINK} />
      <path d={panhandleCells} clipPath="url(#panhandle)" strokeWidth="2.400" />
      <path d="M342 60l4 14 12 2 5-16" />
      <path d="M280 90l36 5 2 14 60 6 22-4 40-6 46-2M263 152l17 16 8 12-8 8 6 20 16 10M340 114l-2 14-2 16-14 8-14 2 6 14 12 8 0 16 12 4 25 12 50-2M384 115l-6 16-8 2-2 14 8 10 0 10 6 20 8 8-4 12 47 2 10 8 8-16-6-30 4-14-12-8-6-8-10 2-12-4-10-6-2-14 10-14 10-6M437 173l22-2 20 0 2-18M286 178l14-6 12 6 18-2M290 186l38 2M300 182l6 14 2 18M238 230l12-10 18-4 36 2 60-10M364 208l8 26-2 36-8 6M302 220l0 20 2 26M310 236l24-4 8 8-4 22M304 216l40 12 28 12M372 258l44 0 40 4 0-20 6-22M372 252l-2 20-2 14 10 24M372 282l76 4 14-20 20-2 26 6M454 286l0 16 10 26M404 284l0 46M448 288l-28 20 4 22" />
      <path d="M300 272l14 6 8 14 12 8-10-20 10-4 14 18 8 26-14-8-14-12-14-8-4-12zM310 290l16 2 10 22M326 282l18 16M328 266l10 8-12 4M262 286l6 3M278 282l4 6" fill={PINK} strokeWidth="3.400" />
      <path d={coast("360,345 370,343 376,359 388,367 384,383 370,379 364,365 356,357", 4, 5)} fill={PINK} strokeWidth="3" />
      <path d="M456 428l12-12 14 2-10 10-14 8zM494 412l16 6M504 440l8 1M412 408l8-12M398 412l5 1M378 396l5 2M284 310l4 2" fill={PINK} strokeWidth="4" />
      <path d="M470 402l8 4 6-3 8 8 8-1 10 8 8 0 8 7 10 2" strokeWidth="4" />
      <path d="M540 206l8-12 22-4-8 8-10 12zM524 284l16-2 2 8-8 8-10-4z" fill={PINK} />
      <path d="M574 444l20 2 4 8-18-4zM545 432l16 6-2 4-14-4zM596 448l18 10-8 2z" fill={PINK} />
      <path d="M600 262l4-4 2-6M596 346l6 2M593 362l3 1M864 336l2-8 8-3M856 346l4-2M868 346l1 0M836 370l2 1M804 420l6-12M806 404l8-6M790 409l4 1M820 392l6 0M482 148l14 6M520 153l3 1" strokeWidth="4" />
      <path d={chain} strokeWidth="4.500" />
    </g>
  </svg>
);

/* ---------- content ---------- */
const MENUS: [string, number, number][] = [
  ["Project", 3, 37], ["Edit", 0, 20], ["View", 0, 25], ["Layer", 0, 28], ["Settings", 0, 42], ["Plugins", 0, 39], ["Vector", 4, 33],
  ["Raster", 0, 32], ["Database", 0, 48], ["Web", 0, 24], ["Mesh", 0, 29], ["Processing", 3, 57], ["Help", 0, 25],
];

/* "|" grip, "-" separator, "v" menu caret; "!" marks a disabled entry, "*" the active tool */
const BARS = [
  ["newDoc", "open", "save", "layout", "manager", "style", "|", "*hand", "panSel", "zoomIn", "zoomOut", "zoomFull", "zoomSel", "zoomLayer", "!zoomNative", "!zoomLast", "!zoomNext", "newBook", "newMark", "showBook", "clock", "refresh", "|", "identify", "table", "abacus", "gear", "sigma", "ruler", "v", "mapTip", "!action", "!v", "annot", "v"],
  ["dataSource", "gpkgNew", "shp", "spatialiteNew", "memory", "-", "virtual", "-", "|", "!edits", "pencil", "!saveEdits", "!addPoly", "!vertex", "!v", "!modify", "!trash", "!cut", "!copy", "!paste", "!undo", "!redo", "|", "label", "diagram", "-", "labelPin", "labelRed", "-", "!lPin", "!lShow", "!lMove", "!lRot", "!lEdit", "|", "search", "|", "python", "|", "help"],
  ["select", "v", "selForm", "v", "deselect", "v"],
];

const Bar = ({ items, lower }: { items: string[]; lower: boolean }) => (
  <Toolbar $lower={lower}>
    <Grip $first />
    {items.map((raw, i) => {
      const off = raw[0] === "!";
      const active = raw[0] === "*";
      const name = off || active ? raw.slice(1) : raw;
      if (name === "|") return <Grip key={i} />;
      if (name === "-") return <Separator key={i} />;
      if (name === "v") return <Caret key={i} $off={off} />;
      return <ToolButton key={i} $off={off} $active={active}><Ico>{icons[name]}</Ico></ToolButton>;
    })}
  </Toolbar>
);

const TREE: [string, string, boolean][] = [
  ["star", "Favorites", false], ["bookmark", "Spatial Bookmarks", true], ["projHome", "Project Home", true], ["home", "Home", true],
  ["folder", "C:\\", true], ["folder", "D:\\", true], ["folder", "E:\\", true], ["gpkg", "GeoPackage", false], ["feather", "SpatiaLite", false],
  ["elephant", "PostGIS", false], ["mssql", "MSSQL", false], ["oracle", "Oracle", false], ["db2", "DB2", false], ["globe", "WMS/WMTS", false], ["tiles", "Vector Tiles", false],
];

export default function App() {
  return (
    <Window>
      <GlobalStyle />
      <TitleBar>
        <svg width="16" height="16" viewBox="0 0 16 16" fill="none">
          <circle cx="8" cy="7.500" r="5.700" stroke="#589632" strokeWidth="3.400" />
          <path d="M3 5a5.700 5.700 0 0 1 5-3.200" stroke="#93b023" strokeWidth="3" />
          <path d="M8 8l3 .5 5 5v2.500h-3L8.500 11z" fill="#589632" stroke="#fff" strokeWidth=".6" />
          <circle cx="9" cy="8.500" r="1.800" fill="#ee7913" />
        </svg>
        <Title>project — QGIS</Title>
        <WindowButton><svg width="10" height="10"><path d="M0 5.500h10" stroke="#111" /></svg></WindowButton>
        <WindowButton><svg width="10" height="10" fill="none" stroke="#111"><path d="M.5 2.500h7v7h-7zM2.500 2.500v-2h7v7h-2" /></svg></WindowButton>
        <WindowButton><svg width="10" height="10" stroke="#111"><path d="M.5.5l9 9M9.500.5l-9 9" /></svg></WindowButton>
      </TitleBar>
      <MenuBar>
        {MENUS.map(([label, at, w]) => (
          <MenuItem key={label} $w={w}>{label.slice(0, at)}<u>{label[at]}</u>{label.slice(at + 1)}</MenuItem>
        ))}
      </MenuBar>
      {BARS.map((items, i) => <Bar key={i} items={items} lower={i > 0} />)}

      <Main>
        <Docks>
          <DockHeader><span>Browser</span><DockButtons /></DockHeader>
          <DockTools>
            {["addLayer", "refresh", "filter", "collapse", "info"].map((n) => <Ico key={n} s={16}>{icons[n]}</Ico>)}
          </DockTools>
          <ListBox $h={262}>
            <Rows>
              {TREE.map(([icon, label, open]) => (
                <Row key={label}><Expander $on={open} /><Ico s={16}>{icons[icon]}</Ico><RowLabel>{label}</RowLabel></Row>
              ))}
            </Rows>
            <ScrollBar>
              <ScrollButton />
              <Thumb />
              <ScrollTrack />
              <ScrollButton $down />
            </ScrollBar>
          </ListBox>
          <Splitter />
          <DockHeader><span>Layers</span><DockButtons /></DockHeader>
          <DockTools>
            {["styling", "addGroup", "eye", "filter", "epsilon"].map((n) => <Ico key={n} s={16}>{icons[n]}</Ico>)}
            <Caret $w={3} />
            {["expand", "collapse", "removeLayer"].map((n) => <Ico key={n} s={16}>{icons[n]}</Ico>)}
          </DockTools>
          <ListBox $h={204}>
            <Rows>
              <Row $selected><Expander /><CheckBox /><Swatch $c="#a272a4" /><RowLabel $strong $underline>US_tract_2010</RowLabel></Row>
              <Row><Expander /><CheckBox /><Swatch $c="#f3a1ae" /><RowLabel $strong>districts</RowLabel></Row>
            </Rows>
          </ListBox>
        </Docks>
        <Splitter $vertical />
        <Canvas><MapView /></Canvas>
      </Main>

      <StatusBar>
        <Field $w={200}>
          <svg width="16" height="16" viewBox="0 0 16 16" fill="none" stroke="#888" strokeWidth="1.200"><circle cx="7" cy="6.500" r="4" /><path d="M10 9.500l4 4" strokeWidth="1.700" /></svg>
          <FieldText $muted>Type to locate (Ctrl+K)</FieldText>
        </Field>
        <StatusText $w={57} $ml={269}>Coordinate</StatusText>
        <Field $w={105}><FieldText>-2196625,-151058</FieldText></Field>
        <StatusIcon $ml={4}>
          <svg width="15" height="15" viewBox="0 0 15 15" fill="none" stroke="#333"><circle cx="3.500" cy="4" r="2.300" /><circle cx="8" cy="8" r="2.500" strokeWidth="1.400" /><circle cx="11" cy="12" r="2" /><path d="M3 1l4 4M1 6l6 6M9 4l4-3M11 5l3-1M6 11l3 3" strokeWidth="1.300" /></svg>
        </StatusIcon>
        <StatusText $w={29} $ml={13}>Scale</StatusText>
        <Field $w={80} $right>
          <FieldText $end>1:65068816</FieldText>
          <FieldButton $w={20}><Tip /></FieldButton>
        </Field>
        <StatusIcon $ml={12}>
          <svg width="13" height="16" viewBox="0 0 13 16" fill="none"><path d="M3 8V4.500c0-4.500 7-4.500 7 0V8" stroke="#777" strokeWidth="1.700" /><rect x="1" y="7" width="11" height="8" rx="1" fill="#555" /><path d="M1.500 9.500h10M1.500 12h10" stroke="#888" strokeWidth=".7" /></svg>
        </StatusIcon>
        <StatusText $w={48} $ml={8}>Magnifier</StatusText>
        <Field $w={88}>
          <FieldText>100%</FieldText>
          <FieldButton $w={14}><Tip $up /><Tip /></FieldButton>
        </Field>
        <StatusText $w={51} $ml={8}>Rotation</StatusText>
        <Field $w={84}>
          <FieldText>0,0 °</FieldText>
          <FieldButton $w={14}><Tip $up /><Tip /></FieldButton>
        </Field>
        <StatusIcon $ml={6}><CheckBox /></StatusIcon>
        <StatusText $w={53} $ml={5}>Render</StatusText>
        <StatusIcon>
          <svg width="15" height="15" viewBox="0 0 15 15" fill="none"><circle cx="7.500" cy="7.500" r="6" fill="#777" /><path d="M2 4.500h11M2 10.500h11M7.500 1v13M5 2c-2 3-2 8 0 11M10 2c2 3 2 8 0 11" stroke="#ddd" strokeWidth=".8" /><path d="M0 7.500h15" stroke="#555" /></svg>
        </StatusIcon>
        <StatusText $w={70} $ml={4}>EPSG:5514</StatusText>
        <StatusIcon $ml={3}>
          <svg width="16" height="16" viewBox="0 0 16 16"><path d="M8 1c5 0 7.500 2 7.500 5.500 0 2.500-1 4-3 5l2 3.500-5-2.500C3.500 13 .5 10.500.5 6.500.5 3 3 1 8 1z" fill="#4d4d4d" /><circle cx="4.500" cy="7" r="1.100" fill="#fff" /><circle cx="8" cy="7" r="1.100" fill="#fff" /><circle cx="11.500" cy="7" r="1.100" fill="#fff" /></svg>
        </StatusIcon>
      </StatusBar>
      <Taskbar />
    </Window>
  );
}
